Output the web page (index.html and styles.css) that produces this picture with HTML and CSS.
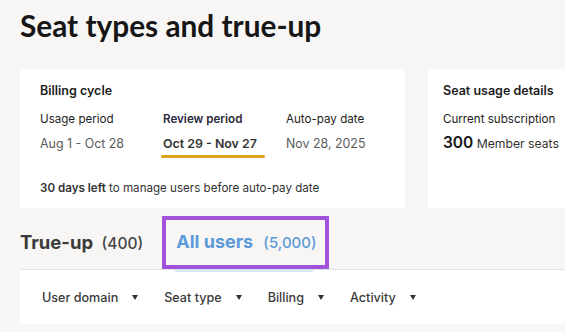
FILE: index.html
```html
<!DOCTYPE html>
<html>
<head>
<meta charset="utf-8">
<link rel="stylesheet" href="styles.css">
</head>
<body>
<div class="page">
  <h1 class="title">Seat types and true-up</h1>
  <div class="cards">
    <section class="card billing">
      <h2 class="card-title">Billing cycle</h2>
      <div class="periods">
        <div class="period">
          <div class="label">Usage period</div>
          <div class="value">Aug 1 - Oct 28</div>
        </div>
        <div class="period current">
          <div class="label">Review period</div>
          <div class="value">Oct 29 - Nov 27</div>
        </div>
        <div class="period">
          <div class="label">Auto-pay date</div>
          <div class="value">Nov 28, 2025</div>
        </div>
      </div>
      <p class="note"><b>30 days left</b> to manage users before auto-pay date</p>
    </section>
    <section class="card usage">
      <h2 class="card-title">Seat usage details</h2>
      <div class="label">Current subscription</div>
      <div class="seats"><b>300</b> Member seats</div>
    </section>
  </div>
  <div class="tabs">
    <div class="tab">True-up <span class="count">(400)</span></div>
    <div class="tab active">All users <span class="count">(5,000)</span></div>
  </div>
  <div class="filters">
    <div class="filter">User domain <span class="caret"></span></div>
    <div class="filter">Seat type <span class="caret"></span></div>
    <div class="filter">Billing <span class="caret"></span></div>
    <div class="filter">Activity <span class="caret"></span></div>
  </div>
</div>
</body>
</html>
```
FILE: styles.css
```css
html, body {
  margin: 0;
  padding: 0;
  background: #f7f6f4;
  overflow: hidden;
  width: 565px;
  height: 332px;
}
.page {
  padding-left: 20px;
  font-family: Inter, "Noto Sans", sans-serif;
  color: #1c1c1c;
  overflow: hidden;
  height: 332px;
}
.title {
  margin: 0;
  padding-top: 6px;
  height: 63px;
  font-family: Lato, Inter, sans-serif;
  font-size: 29.8px;
  line-height: 40px;
  font-weight: 700;
  color: #161616;
}
.cards {
  display: flex;
  gap: 23px;
  height: 139px;
}
.card {
  background: #fff;
  box-sizing: border-box;
  flex: none;
}
.billing {
  width: 385px;
  padding: 14px 0 0 20px;
}
.usage {
  width: 200px;
  padding: 14px 0 0 15px;
}
.card-title {
  margin: 0;
  font-size: 12.5px;
  line-height: 16px;
  font-weight: 600;
  color: #1c1c1c;
}
.periods {
  display: grid;
  grid-template-columns: 123px 123px 100px;
  margin-top: 12px;
}
.label {
  font-size: 11.6px;
  line-height: 16px;
  color: #222;
}
.usage .label {
  margin-top: 12px;
}
.period.current .label {
  font-weight: 600;
  color: #2a2a3a;
}
.value {
  margin-top: 8px;
  font-size: 12.4px;
  line-height: 17px;
  color: #5a5a5a;
}
.period.current .value {
  font-weight: 600;
  color: #333;
  position: relative;
}
.period.current .value::after {
  content: "";
  position: absolute;
  left: -2px;
  top: 20px;
  width: 104px;
  height: 3px;
  border-radius: 2px;
  background: #e0a321;
}
.note {
  margin: 29px 0 0;
  font-size: 11.6px;
  line-height: 14px;
  color: #333;
}
.note b {
  font-weight: 600;
}
.seats {
  margin-top: 7px;
  font-size: 12.2px;
  line-height: 18px;
  color: #333;
}
.seats b {
  font-size: 15.5px;
  font-weight: 600;
  color: #161616;
}
.tabs {
  display: flex;
  align-items: flex-end;
  height: 61px;
  border-bottom: 1px solid #e4e4e4;
  margin-right: -20px;
}
.tab {
  font-size: 18.5px;
  font-weight: 700;
  color: #3a3a3a;
  line-height: 24px;
  padding-bottom: 13px;
}
.tab .count {
  font-size: 15.5px;
  font-weight: 500;
  color: #444;
  margin-left: 4px;
}
.tab.active {
  position: relative;
  margin-left: 19px;
  padding: 10px 8px 10px 10px;
  border: 4px solid #a052da;
  color: #5b9ad8;
  font-size: 18px;
}
.tab.active .count {
  color: #5b9ad8;
  margin-left: 6px;
  font-size: 15px;
}
.tab.active::after {
  content: "";
  position: absolute;
  left: 9px;
  right: 12px;
  bottom: -7px;
  height: 3px;
  background: #d6e8f8;
}
.filters {
  display: flex;
  align-items: center;
  gap: 26px;
  height: 54px;
  background: #fff;
  padding-left: 22px;
  margin-right: -20px;
}
.filter {
  display: flex;
  align-items: center;
  gap: 14px;
  font-size: 12.6px;
  font-weight: 500;
  color: #3a3a3a;
}
.caret {
  width: 0;
  height: 0;
  border-left: 3px solid transparent;
  border-right: 3px solid transparent;
  border-top: 5px solid #333;
}
```
